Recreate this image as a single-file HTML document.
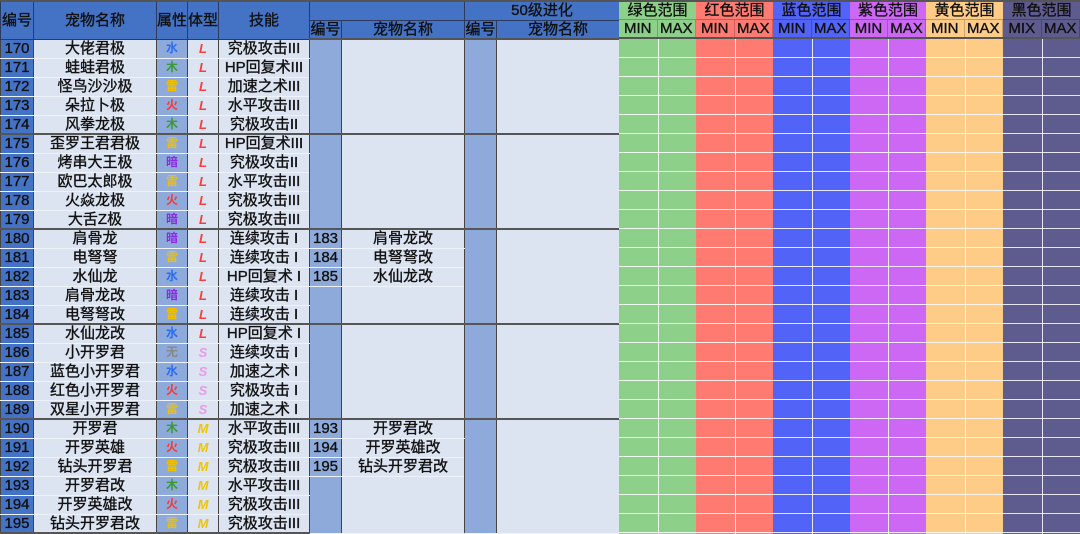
<!DOCTYPE html>
<html><head><meta charset="utf-8">
<style>
*{margin:0;padding:0;box-sizing:border-box}
body{width:1080px;height:534px;overflow:hidden;background:#fff;font-family:"Liberation Sans","Noto Sans CJK SC",sans-serif;position:relative}
table{position:absolute;left:0;top:0;border-collapse:collapse;table-layout:fixed;width:619px}
td{padding:0;height:19px;line-height:17px;font-size:15px;text-align:center;color:#111;-webkit-text-stroke:0.35px #111;border:1px solid #eef2fa;border-left:1px solid #444;border-right:1px solid #444;overflow:hidden;white-space:nowrap}
thead td{background:#4472c4;border:1px solid #2a3a60;font-size:15px}
thead tr:first-child td{border-top:2px solid #555}
thead tr:last-child td{border-bottom:2px solid #555}
.n{background:#4472c4}
.nm{background:#dce3f1}
.at{background:#8eaadb;font-size:12px;font-weight:bold;-webkit-text-stroke:0}
.bt{background:#dce3f1;font-size:13px;font-weight:bold;font-style:italic;-webkit-text-stroke:0}
.sk{background:#dce3f1}
.en{background:#8eaadb}
.ev{background:#dce3f1}
tr.g td{border-top:2px solid #555}
tr.last td{border-bottom:2px solid #555}
.w{color:#2a6cf0}.m{color:#3a9a3a}.t{color:#f0c000}.f{color:#f03c3c}.d{color:#8a2be2}.x{color:#888}
.L{color:#f04040}.S{color:#e79be8}.M{color:#f0c400}
.col{position:absolute;top:0;height:534px}
.h1{height:19px;border-top:2px solid #555;font-size:15px;text-align:center;line-height:17px;color:#111;-webkit-text-stroke:0.35px #111}
.h2{height:20px;display:flex;border-top:1px solid rgba(0,0,0,.25);border-bottom:2px solid #555;font-size:15px;line-height:17px;color:#111;-webkit-text-stroke:0.35px #111}
.h2 span{flex:1;text-align:center;border-right:1px solid rgba(0,0,0,.2)}
.body{height:495px;background-image:repeating-linear-gradient(to bottom,transparent 0,transparent 18px,rgba(255,255,255,.85) 18px,rgba(255,255,255,.85) 19px);position:relative}
.body:after{content:"";position:absolute;left:50%;top:0;bottom:0;width:1px;background:rgba(255,255,255,.85)}
</style></head><body>
<table>
<colgroup><col style="width:33px"><col style="width:123px"><col style="width:31px"><col style="width:31px"><col style="width:91px"><col style="width:32px"><col style="width:123px"><col style="width:32px"><col style="width:123px"></colgroup>
<thead>
<tr><td rowspan="2">编号</td><td rowspan="2">宠物名称</td><td rowspan="2">属性</td><td rowspan="2">体型</td><td rowspan="2">技能</td><td colspan="2"></td><td colspan="2">50级进化</td></tr>
<tr><td>编号</td><td>宠物名称</td><td>编号</td><td>宠物名称</td></tr>
</thead>
<tbody>
<tr><td class="n">170</td><td class="nm">大佬君极</td><td class="at w">水</td><td class="bt L">L</td><td class="sk">究极攻击III</td><td class="en" rowspan="5"></td><td class="ev" rowspan="5"></td><td class="en" rowspan="5"></td><td class="ev" rowspan="5"></td></tr>
<tr><td class="n">171</td><td class="nm">蛙蛙君极</td><td class="at m">木</td><td class="bt L">L</td><td class="sk">HP回复术III</td></tr>
<tr><td class="n">172</td><td class="nm">怪鸟沙沙极</td><td class="at t">雷</td><td class="bt L">L</td><td class="sk">加速之术III</td></tr>
<tr><td class="n">173</td><td class="nm">朵拉卜极</td><td class="at f">火</td><td class="bt L">L</td><td class="sk">水平攻击III</td></tr>
<tr><td class="n">174</td><td class="nm">风拳龙极</td><td class="at m">木</td><td class="bt L">L</td><td class="sk">究极攻击II</td></tr>
<tr class="g"><td class="n">175</td><td class="nm">歪罗王君君极</td><td class="at t">雷</td><td class="bt L">L</td><td class="sk">HP回复术III</td><td class="en" rowspan="5"></td><td class="ev" rowspan="5"></td><td class="en" rowspan="5"></td><td class="ev" rowspan="5"></td></tr>
<tr><td class="n">176</td><td class="nm">烤串大王极</td><td class="at d">暗</td><td class="bt L">L</td><td class="sk">究极攻击II</td></tr>
<tr><td class="n">177</td><td class="nm">欧巴太郎极</td><td class="at t">雷</td><td class="bt L">L</td><td class="sk">水平攻击III</td></tr>
<tr><td class="n">178</td><td class="nm">火焱龙极</td><td class="at f">火</td><td class="bt L">L</td><td class="sk">究极攻击III</td></tr>
<tr><td class="n">179</td><td class="nm">大舌Z极</td><td class="at d">暗</td><td class="bt L">L</td><td class="sk">究极攻击III</td></tr>
<tr class="g"><td class="n">180</td><td class="nm">肩骨龙</td><td class="at d">暗</td><td class="bt L">L</td><td class="sk">连续攻击 I</td><td class="en">183</td><td class="ev">肩骨龙改</td><td class="en" rowspan="5"></td><td class="ev" rowspan="5"></td></tr>
<tr><td class="n">181</td><td class="nm">电弩弩</td><td class="at t">雷</td><td class="bt L">L</td><td class="sk">连续攻击 I</td><td class="en">184</td><td class="ev">电弩弩改</td></tr>
<tr><td class="n">182</td><td class="nm">水仙龙</td><td class="at w">水</td><td class="bt L">L</td><td class="sk">HP回复术 I</td><td class="en">185</td><td class="ev">水仙龙改</td></tr>
<tr><td class="n">183</td><td class="nm">肩骨龙改</td><td class="at d">暗</td><td class="bt L">L</td><td class="sk">连续攻击 I</td><td class="en" rowspan="2"></td><td class="ev" rowspan="2"></td></tr>
<tr><td class="n">184</td><td class="nm">电弩弩改</td><td class="at t">雷</td><td class="bt L">L</td><td class="sk">连续攻击 I</td></tr>
<tr class="g"><td class="n">185</td><td class="nm">水仙龙改</td><td class="at w">水</td><td class="bt L">L</td><td class="sk">HP回复术 I</td><td class="en" rowspan="5"></td><td class="ev" rowspan="5"></td><td class="en" rowspan="5"></td><td class="ev" rowspan="5"></td></tr>
<tr><td class="n">186</td><td class="nm">小开罗君</td><td class="at x">无</td><td class="bt S">S</td><td class="sk">连续攻击 I</td></tr>
<tr><td class="n">187</td><td class="nm">蓝色小开罗君</td><td class="at w">水</td><td class="bt S">S</td><td class="sk">加速之术 I</td></tr>
<tr><td class="n">188</td><td class="nm">红色小开罗君</td><td class="at f">火</td><td class="bt S">S</td><td class="sk">究极攻击 I</td></tr>
<tr><td class="n">189</td><td class="nm">双星小开罗君</td><td class="at t">雷</td><td class="bt S">S</td><td class="sk">加速之术 I</td></tr>
<tr class="g"><td class="n">190</td><td class="nm">开罗君</td><td class="at m">木</td><td class="bt M">M</td><td class="sk">水平攻击III</td><td class="en">193</td><td class="ev">开罗君改</td><td class="en" rowspan="6"></td><td class="ev" rowspan="6"></td></tr>
<tr><td class="n">191</td><td class="nm">开罗英雄</td><td class="at f">火</td><td class="bt M">M</td><td class="sk">究极攻击III</td><td class="en">194</td><td class="ev">开罗英雄改</td></tr>
<tr><td class="n">192</td><td class="nm">钻头开罗君</td><td class="at t">雷</td><td class="bt M">M</td><td class="sk">究极攻击III</td><td class="en">195</td><td class="ev">钻头开罗君改</td></tr>
<tr><td class="n">193</td><td class="nm">开罗君改</td><td class="at m">木</td><td class="bt M">M</td><td class="sk">水平攻击III</td><td class="en" rowspan="3"></td><td class="ev" rowspan="3"></td></tr>
<tr><td class="n">194</td><td class="nm">开罗英雄改</td><td class="at f">火</td><td class="bt M">M</td><td class="sk">究极攻击III</td></tr>
<tr class="last"><td class="n">195</td><td class="nm">钻头开罗君改</td><td class="at t">雷</td><td class="bt M">M</td><td class="sk">究极攻击III</td></tr>
</tbody>
</table>

<div class="col" style="left:619px;width:77px;background:#8dd08a"><div class="h1">绿色范围</div><div class="h2"><span>MIN</span><span>MAX</span></div><div class="body"></div></div>
<div class="col" style="left:696px;width:77px;background:#ff7b72"><div class="h1">红色范围</div><div class="h2"><span>MIN</span><span>MAX</span></div><div class="body"></div></div>
<div class="col" style="left:773px;width:77px;background:#5263f7"><div class="h1">蓝色范围</div><div class="h2"><span>MIN</span><span>MAX</span></div><div class="body"></div></div>
<div class="col" style="left:850px;width:76px;background:#cd68f5"><div class="h1">紫色范围</div><div class="h2"><span>MIN</span><span>MAX</span></div><div class="body"></div></div>
<div class="col" style="left:926px;width:77px;background:#ffcc88"><div class="h1">黄色范围</div><div class="h2"><span>MIN</span><span>MAX</span></div><div class="body"></div></div>
<div class="col" style="left:1003px;width:77px;background:#5e5b8e"><div class="h1">黑色范围</div><div class="h2"><span>MIX</span><span>MAX</span></div><div class="body"></div></div>
</body></html>
